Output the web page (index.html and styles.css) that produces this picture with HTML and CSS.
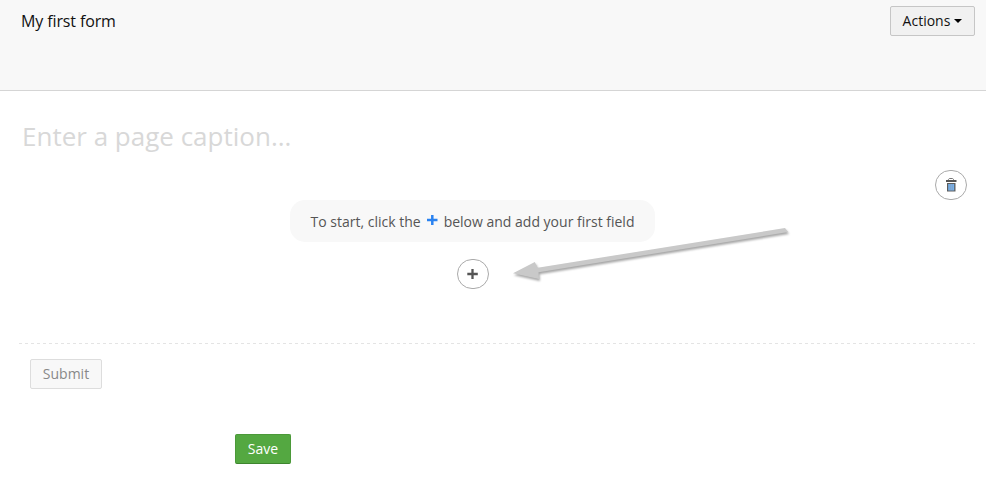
FILE: index.html
```html
<!DOCTYPE html>
<html lang="en">
<head>
<meta charset="utf-8">
<title>My first form</title>
<link rel="stylesheet" href="styles.css">
</head>
<body>
<header class="header">
  <h1 class="form-name">My first form</h1>
  <button class="btn actions">Actions<span class="caret"></span></button>
</header>
<main class="page">
  <h2 class="caption">Enter a page caption...</h2>
  <div class="tools">
    <button class="round" aria-label="Delete page">
      <svg width="12" height="14" viewBox="0 0 12 14"><path d="M3.5 2V1.3L4.3.5h3.4l.8.8V2" fill="none" stroke="#777"/><path d="M1 2h10.500v2H1z" fill="#555"/><path d="M2 5h8.500v8.500H2z" fill="#5c5c5c"/><path d="M3.200 6h6v6.500h-6z" fill="#75b2ee"/><path d="M5.200 6v6.500M7.200 6v6.500" stroke="#8a96a6" stroke-width=".6"/></svg>
    </button>
  </div>
  <div class="start">
    <p class="hint"><span>To start, click the</span><svg class="hint-plus" width="11" height="12" viewBox="0 0 11 12"><path d="M5.300 1v10M0 6h10.500" stroke="#2a82f0" stroke-width="2.500"/></svg><span>below and add your first field</span></p>
    <button class="round" aria-label="Add field">
      <svg width="12" height="12" viewBox="0 0 12 12"><path d="M5.500 1v10M.3 6h10.500" stroke="#555" stroke-width="2.300"/></svg>
    </button>
    <svg class="arrow" width="290" height="64" viewBox="510 222 290 64"><path d="M514 273.300L535.800 262L538.600 267.800L786 228L789 232L539.500 272.200L540 279z"/></svg>
  </div>
  <div class="divider"></div>
  <button class="btn submit">Submit</button>
</main>
<footer class="footer"><button class="btn save">Save</button></footer>
</body>
</html>
```

FILE: styles.css
```css
* { box-sizing: border-box; }
body {
  margin: 0;
  background: #fff;
  font: 14px/20px "Open Sans", sans-serif;
  color: #555;
}
h1, h2, p { margin: 0; font-weight: 400; }
button { font: inherit; }
.header {
  display: flex;
  justify-content: space-between;
  align-items: flex-start;
  height: 91px;
  padding: 6px 11px 0 21px;
  background: #f8f8f8;
  border-bottom: 1px solid #d5d5d5;
}
.form-name {
  padding-top: 5px;
  font-size: 16px;
  line-height: 20px;
  letter-spacing: -0.12px;
  color: #111;
}
.btn {
  display: flex;
  align-items: center;
  justify-content: center;
  height: 30px;
  padding: 0;
  border: 1px solid #c6c6c6;
  border-radius: 2px;
}
.actions {
  width: 85px;
  gap: 4px;
  background: #f1f1f1;
  color: #111;
}
.caret {
  border: 4px solid transparent;
  border-top-color: #000;
  border-bottom: 0;
}
.page { padding: 27px 11px 0 19px; }
.caption {
  height: 38px;
  padding-left: 3px;
  font-size: 26px;
  line-height: 36px;
  color: #d8d8d8;
}
.tools {
  display: flex;
  justify-content: flex-end;
  height: 44px;
  padding: 14px 8px 0 0;
}
.round {
  display: flex;
  align-items: center;
  justify-content: center;
  width: 32px;
  height: 30px;
  padding: 0;
  border: 1px solid #aaa;
  border-radius: 15px;
  background: #fff;
}
.start {
  position: relative;
  display: flex;
  flex-direction: column;
  align-items: center;
  gap: 17px;
  width: 907px;
  height: 143px;
}
.hint {
  display: flex;
  align-items: center;
  justify-content: center;
  width: 365px;
  height: 42px;
  padding-top: 2px;
  border-radius: 15px;
  background: #f8f8f8;
}
.hint-plus { margin: -4px 6px 0; }
.arrow {
  position: absolute;
  left: 490px;
  top: 22px;
  fill: #c9c9c9;
  filter: drop-shadow(1px 2px 1px rgba(0, 0, 0, .35));
}
.divider {
  height: 1px;
  background: repeating-linear-gradient(90deg, #e4e4e4 0 3px, transparent 3px 6px);
}
.submit {
  width: 72px;
  margin: 15px 0 0 11px;
  border-color: #ddd;
  background: #f8f8f8;
  color: #888;
}
.footer { padding: 45px 0 0 235px; }
.save {
  width: 56px;
  border-color: #4b9939 #4b9939 #3d852e;
  background: #54a841;
  color: #fff;
}
```
